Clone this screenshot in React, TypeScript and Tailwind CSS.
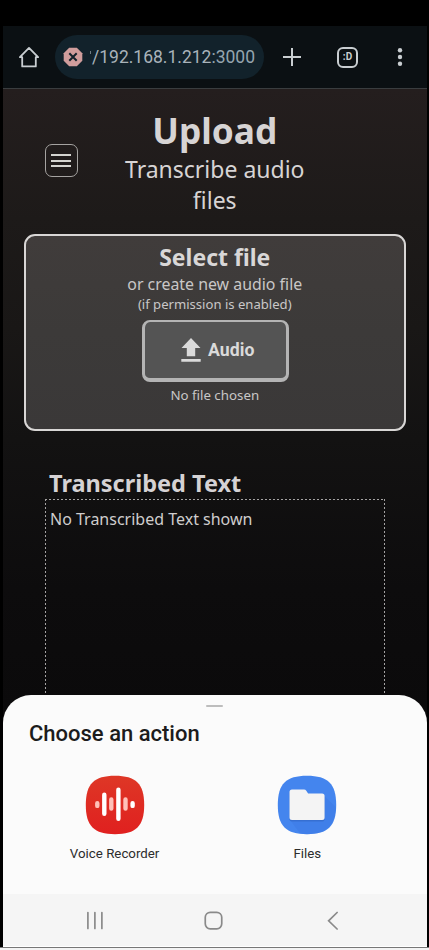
import React from "react";

const squircle = "M30 .8C51 .8 59.2 9 59.2 30S51 59.2 30 59.2.8 51 .8 30 9 .8 30 .8Z";

function BrowserBar() {
  return (
    <header className="flex h-[63px] shrink-0 items-center border-b border-[#3a3d3f] bg-[#0b1013] font-['Roboto',sans-serif]">
      <svg className="ml-[15.500px] h-[22px] w-[22px] shrink-0" viewBox="0 0 22 22" fill="none" stroke="#c9ced1" strokeWidth="1.8" strokeLinejoin="round" strokeLinecap="round">
        <path d="M1.900 11.200h2.300v9.200h13.600v-9.200h2.300L11 1.900Z" />
      </svg>
      <div className="ml-[15px] flex h-[44px] w-[209px] shrink-0 items-center rounded-full bg-[#12222b]">
        <svg className="ml-[8px] h-5 w-5 shrink-0" viewBox="0 0 20 20">
          <path d="M6.200.700h7.600l5.500 5.500v7.600l-5.500 5.500H6.200L.700 13.800V6.200Z" fill="#d09d9c" />
          <path d="m6.300 6.300 7.400 7.400m0-7.400-7.400 7.400" stroke="#12222b" strokeWidth="2" />
        </svg>
        <div className="ml-[7px] flex w-[165px] whitespace-nowrap text-[17.500px] leading-6 text-[#a9b3ba]">
          <span className="mt-[6px] mr-px h-[3px] w-px bg-[#6f7c84]" />
          <span>/192.168.1.212<span className="text-[#95a5af]">:3000</span></span>
        </div>
      </div>
      <svg className="ml-[18px] h-5 w-5 shrink-0" viewBox="0 0 20 20" stroke="#c9ced1" strokeWidth="2">
        <path d="M1 10h18M10 1v18" />
      </svg>
      <div className="ml-[35px] flex h-[21px] w-[21px] shrink-0 items-center justify-center rounded-[6px] border-2 border-[#c9ced1] text-[10px] font-bold leading-none text-[#c9ced1]">:D</div>
      <svg className="ml-[39px] h-5 w-[6px] shrink-0" viewBox="0 0 6 20" fill="#c9ced1">
        <circle cx="3" cy="3.200" r="2.200" />
        <circle cx="3" cy="10" r="2.200" />
        <circle cx="3" cy="16.800" r="2.200" />
      </svg>
    </header>
  );
}

function UploadCard() {
  return (
    <section className="mx-[21px] flex h-[197px] shrink-0 flex-col items-center rounded-[11px] border-2 border-[#d8d6d5] bg-linear-to-b from-[#403c3b] via-[#3c3a39] to-[#3a3838] whitespace-nowrap">
      <h2 className="mt-[5px] text-[23px] font-bold leading-[32px] text-[#d9d7d7]">Select file</h2>
      <p className="text-[15.900px] leading-[22px] text-[#c9c7c7]">or create new audio file</p>
      <p className="text-[13.100px] leading-[18px] text-[#c9c7c7]">(if permission is enabled)</p>
      <button className="ml-px mt-[7px] flex h-[62px] w-[147px] items-center justify-center rounded-[8px] border-2 border-r-[3px] border-b-4 border-l-[3px] border-[#b4b4b4] bg-[#545454] pl-[5px] text-[17.700px] font-bold text-[#dadada]">
        <svg className="mr-[7px] h-6 w-5 shrink-0" viewBox="0 0 20 24" fill="#dadada">
          <path d="M10 0 19.500 10h-5.300v8.300H5.800V10H.500ZM.300 21h19.400v2.700H.300Z" />
        </svg>
        <span className="font-['Roboto',sans-serif]">Audio</span>
      </button>
      <p className="mt-[3px] text-[13.300px] leading-[20px] text-[#c9c7c7]">No file chosen</p>
    </section>
  );
}

function ActionSheet() {
  return (
    <section className="absolute inset-x-0 bottom-0 flex h-[252px] flex-col overflow-hidden rounded-t-[28px] bg-[#fbfbfb] font-['Roboto',sans-serif]">
      <div className="mx-auto mt-[10px] h-[2px] w-[17px] shrink-0 rounded-full bg-[#bdbdbd]" />
      <h2 className="ml-[26.500px] mt-[13px] text-[22px] font-medium leading-[28px] text-[#1c1c1c]">Choose an action</h2>
      <div className="mt-[27px] grid grid-cols-2 text-center text-[13.300px] leading-[18px] text-[#2c2c2c]">
        <div className="flex flex-col items-center pl-[12px]">
          <svg className="h-[60px] w-[60px]" viewBox="0 0 60 60">
            <defs>
              <linearGradient id="rec" x2="0" y2="1">
                <stop stopColor="#de3726" />
                <stop offset="1" stopColor="#e0201f" />
              </linearGradient>
            </defs>
            <path d={squircle} fill="url(#rec)" />
            <g strokeLinecap="round" strokeWidth="4.400" stroke="#fff">
              <path d="M12.300 28.300v2.600M26.300 24.500v9M40.500 24.500v9" stroke="#ffc0b8" />
              <path d="M19.300 19.800v19M33.400 14.800v29M47.600 28.300v2.600" />
            </g>
          </svg>
          <span className="mt-[10px]">Voice Recorder</span>
        </div>
        <div className="flex flex-col items-center pr-[27px]">
          <svg className="h-[60px] w-[60px]" viewBox="0 0 60 60">
            <path d={squircle} fill="#4485ee" />
            <path d="M47 20.500 58.800 32C58 50 50 59 30 59.200q-4 0-7-.700L13 45Z" fill="#3876df" opacity=".35" />
            <path d="M15 15.500h12q1.500 0 2.300 1.300l1.800 2.700h14q2.500 0 2.500 2.500v22q0 2.500-2.500 2.500H15q-2.500 0-2.500-2.500V18q0-2.500 2.500-2.500Z" fill="#2b60bb" opacity=".5" />
            <path d="M15 14.500h12q1.500 0 2.300 1.300l1.800 2.700h14q2.500 0 2.500 2.500v21.500q0 2.500-2.500 2.500H15q-2.500 0-2.500-2.500V17q0-2.500 2.500-2.500Z" fill="#f4f4f4" />
          </svg>
          <span className="mt-[10px]">Files</span>
        </div>
      </div>
      <nav className="mt-auto flex h-[53px] shrink-0 items-center border-b border-white bg-[#f5f5f5]">
        <svg className="h-[52px] w-full" viewBox="0 0 425 52" fill="none" stroke="#8a8a8a" strokeWidth="1.700" strokeLinecap="round">
          <path d="M85 18.500v16M92 18.500v16M99 18.500v16M334.500 18.500l-8.500 8.300 8.500 8.200" />
          <rect x="202.500" y="18.300" width="16.500" height="16.500" rx="5" />
        </svg>
      </nav>
    </section>
  );
}

export default function App() {
  return (
    <div className="flex h-[950px] w-[429px] flex-col overflow-hidden bg-black font-['Noto_Sans',sans-serif]">
      <div className="h-[26px] shrink-0" />
      <main className="relative ml-[2.500px] mr-[2px] flex h-[921px] shrink-0 flex-col overflow-hidden">
        <BrowserBar />
        <div className="flex min-h-0 flex-1 flex-col bg-[linear-gradient(180deg,#241e1e_0px,#1d1a19_130px,#191716_240px,#131212_350px,#0d0c0d_500px,#0b0a0b_620px)]">
          <div className="relative flex h-[145px] shrink-0 flex-col items-center pt-[17px] whitespace-nowrap">
            <h1 className="text-[35.300px] font-bold leading-[48px] text-[#d7d4d4]">Upload</h1>
            <p className="text-center text-[23px] leading-[31px] text-[#d7d4d4]">Transcribe audio<br />files</p>
            <button aria-label="Menu" className="absolute left-[42px] top-[55px] flex h-[33px] w-[33px] flex-col items-center justify-center gap-[3.500px] rounded-[7px] border border-[#a5a3a1]">
              <span className="h-[2px] w-5 bg-[#d4d4d0]" />
              <span className="h-[2px] w-5 bg-[#d4d4d0]" />
              <span className="h-[2px] w-5 bg-[#d4d4d0]" />
            </button>
          </div>
          <UploadCard />
          <h2 className="ml-[46.500px] mt-[36px] text-[23.500px] font-bold leading-[32px] text-[#d5d2d4]">Transcribed Text</h2>
          <div className="mx-[42px] flex min-h-0 flex-1 flex-col bg-[repeating-linear-gradient(90deg,#a5a3a3_0_2px,transparent_2px_4px),repeating-linear-gradient(180deg,#a5a3a3_0_2px,transparent_2px_4px),repeating-linear-gradient(180deg,#a5a3a3_0_2px,transparent_2px_4px)] bg-[size:100%_1px,1px_100%,1px_100%] bg-[position:top,left,right] bg-no-repeat pl-[5.500px] pt-[8px] text-[16px] leading-6 text-[#cfcdcd]">No Transcribed Text shown</div>
        </div>
        <ActionSheet />
      </main>
      <div className="h-[3px] shrink-0 border-t border-[#777] bg-[#f3f3f3]" />
    </div>
  );
}
